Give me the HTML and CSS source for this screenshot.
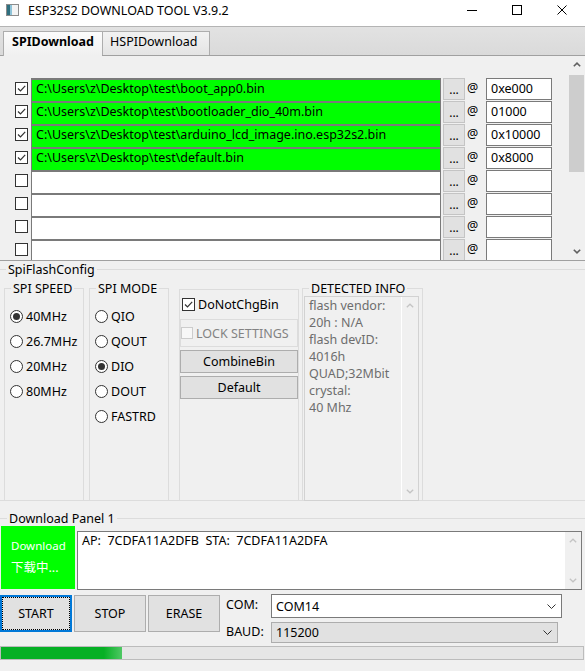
FILE: index.html
```html
<!DOCTYPE html>
<html>
<head>
<meta charset="utf-8">
<title>ESP32S2 DOWNLOAD TOOL V3.9.2</title>
<link rel="stylesheet" href="styles.css">
</head>
<body>
<div class="app">
  <header class="titlebar">
    <svg class="appicon" viewBox="0 0 13 12" width="13" height="12">
      <rect x="0.5" y="0.5" width="12" height="11" fill="#f4f4f4" stroke="#8c8c8c"/>
      <rect x="1" y="1" width="3" height="10" fill="#2f6f7f"/>
      <rect x="4" y="1" width="2" height="10" fill="#8fc3d8"/>
    </svg>
    <span class="title">ESP32S2 DOWNLOAD TOOL V3.9.2</span>
    <div class="winctl">
      <span class="winbtn"><svg viewBox="0 0 10 10"><line x1="0" y1="5.5" x2="10" y2="5.5" stroke="#000" stroke-width="1"/></svg></span>
      <span class="winbtn"><svg viewBox="0 0 10 10"><rect x="0.5" y="0.5" width="9" height="9" fill="none" stroke="#000" stroke-width="1"/></svg></span>
      <span class="winbtn close"><svg viewBox="0 0 10 10"><path d="M0.5 0.5 L9.5 9.5 M9.5 0.5 L0.5 9.5" stroke="#000" stroke-width="1"/></svg></span>
    </div>
  </header>

  <nav class="tabs">
    <div class="tab active">SPIDownload</div>
    <div class="tab">HSPIDownload</div>
  </nav>

  <section class="filelist">
    <div class="rows">
      <div class="row">
        <span class="cb"><svg viewBox="0 0 11 11"><polyline points="2,5.5 4.5,8 9.2,2.8" fill="none" stroke="#333" stroke-width="1.2"/></svg></span>
        <div class="path green">C:\Users\z\Desktop\test\boot_app0.bin</div>
        <span class="dots">...</span><span class="at">@</span>
        <div class="addr green">0xe000</div>
      </div>
      <div class="row">
        <span class="cb"><svg viewBox="0 0 11 11"><polyline points="2,5.5 4.5,8 9.2,2.8" fill="none" stroke="#333" stroke-width="1.2"/></svg></span>
        <div class="path green">C:\Users\z\Desktop\test\bootloader_dio_40m.bin</div>
        <span class="dots">...</span><span class="at">@</span>
        <div class="addr green">01000</div>
      </div>
      <div class="row">
        <span class="cb"><svg viewBox="0 0 11 11"><polyline points="2,5.5 4.5,8 9.2,2.8" fill="none" stroke="#333" stroke-width="1.2"/></svg></span>
        <div class="path green">C:\Users\z\Desktop\test\arduino_lcd_image.ino.esp32s2.bin</div>
        <span class="dots">...</span><span class="at">@</span>
        <div class="addr green">0x10000</div>
      </div>
      <div class="row">
        <span class="cb"><svg viewBox="0 0 11 11"><polyline points="2,5.5 4.5,8 9.2,2.8" fill="none" stroke="#333" stroke-width="1.2"/></svg></span>
        <div class="path green">C:\Users\z\Desktop\test\default.bin</div>
        <span class="dots">...</span><span class="at">@</span>
        <div class="addr green">0x8000</div>
      </div>
      <div class="row">
        <span class="cb"></span><div class="path"></div>
        <span class="dots">...</span><span class="at">@</span><div class="addr"></div>
      </div>
      <div class="row">
        <span class="cb"></span><div class="path"></div>
        <span class="dots">...</span><span class="at">@</span><div class="addr"></div>
      </div>
      <div class="row">
        <span class="cb"></span><div class="path"></div>
        <span class="dots">...</span><span class="at">@</span><div class="addr"></div>
      </div>
      <div class="row">
        <span class="cb"></span><div class="path"></div>
        <span class="dots">...</span><span class="at">@</span><div class="addr"></div>
      </div>
    </div>
    <div class="vscroll">
      <span class="sb-arrow"><svg viewBox="0 0 8 5" width="8" height="5"><polyline points="0.8,4.3 4,1.2 7.2,4.3" fill="none" stroke="#606060" stroke-width="1.6"/></svg></span>
      <span class="sb-thumb"></span>
      <span class="sb-track"></span>
      <span class="sb-arrow"><svg viewBox="0 0 8 5" width="8" height="5"><polyline points="0.8,0.7 4,3.8 7.2,0.7" fill="none" stroke="#606060" stroke-width="1.6"/></svg></span>
    </div>
  </section>

  <fieldset class="spiflash">
    <legend>SpiFlashConfig</legend>
    <div class="cfg">
      <fieldset class="sub speed">
        <legend>SPI SPEED</legend>
        <div class="opt"><span class="radio on"></span>40MHz</div>
        <div class="opt"><span class="radio"></span>26.7MHz</div>
        <div class="opt"><span class="radio"></span>20MHz</div>
        <div class="opt"><span class="radio"></span>80MHz</div>
      </fieldset>
      <fieldset class="sub mode">
        <legend>SPI MODE</legend>
        <div class="opt"><span class="radio"></span>QIO</div>
        <div class="opt"><span class="radio"></span>QOUT</div>
        <div class="opt"><span class="radio on"></span>DIO</div>
        <div class="opt"><span class="radio"></span>DOUT</div>
        <div class="opt"><span class="radio"></span>FASTRD</div>
      </fieldset>
      <fieldset class="sub opts">
        <div class="chk"><span class="cb small"><svg viewBox="0 0 11 11"><polyline points="2,5.5 4.5,8 9.2,2.8" fill="none" stroke="#333" stroke-width="1.2"/></svg></span>DoNotChgBin</div>
        <div class="lockbox"><span class="cb small disabled"></span>LOCK SETTINGS</div>
        <button class="btn wide">CombineBin</button>
        <button class="btn wide">Default</button>
      </fieldset>
      <fieldset class="sub info">
        <legend>DETECTED INFO</legend>
        <div class="infobox">
          <div class="infotext">flash vendor:<br>20h : N/A<br>flash devID:<br>4016h<br>QUAD;32Mbit<br>crystal:<br>40 Mhz</div>
          <div class="vscroll dis">
            <span class="sb-arrow"><svg viewBox="0 0 8 5" width="8" height="5"><polyline points="0.8,4.3 4,1.2 7.2,4.3" fill="none" stroke="#c4c4c4" stroke-width="1.3"/></svg></span>
            <span class="sb-track"></span>
            <span class="sb-arrow"><svg viewBox="0 0 8 5" width="8" height="5"><polyline points="0.8,0.7 4,3.8 7.2,0.7" fill="none" stroke="#c4c4c4" stroke-width="1.3"/></svg></span>
          </div>
        </div>
      </fieldset>
    </div>
  </fieldset>

  <fieldset class="dlpanel">
    <legend>Download Panel 1</legend>
    <div class="dlrow">
      <div class="status"><span class="st-en">Download</span><span class="st-zh">下载中...</span></div>
      <div class="log">
        <div class="logtext">AP:  7CDFA11A2DFB  STA:  7CDFA11A2DFA</div>
        <div class="vscroll dis">
          <span class="sb-arrow"><svg viewBox="0 0 8 5" width="8" height="5"><polyline points="0.8,4.3 4,1.2 7.2,4.3" fill="none" stroke="#c4c4c4" stroke-width="1.3"/></svg></span>
          <span class="sb-track"></span>
          <span class="sb-arrow"><svg viewBox="0 0 8 5" width="8" height="5"><polyline points="0.8,0.7 4,3.8 7.2,0.7" fill="none" stroke="#c4c4c4" stroke-width="1.3"/></svg></span>
        </div>
      </div>
    </div>
  </fieldset>

  <div class="actions">
    <button class="btn act focus">START</button>
    <button class="btn act">STOP</button>
    <button class="btn act">ERASE</button>
    <div class="ports">
      <span class="plabel com">COM:</span>
      <div class="combo com"><span>COM14</span><svg viewBox="0 0 9 5" width="9" height="5"><polyline points="0.5,0.5 4.5,4.5 8.5,0.5" fill="none" stroke="#333" stroke-width="1"/></svg></div>
      <span class="plabel baud">BAUD:</span>
      <div class="combo baud"><span>115200</span><svg viewBox="0 0 9 5" width="9" height="5"><polyline points="0.5,0.5 4.5,4.5 8.5,0.5" fill="none" stroke="#333" stroke-width="1"/></svg></div>
    </div>
  </div>

  <div class="progress"><div class="fill" style="width:121px"></div></div>
</div>
</body>
</html>
```

FILE: styles.css
```css
* { box-sizing: border-box; }
html, body { margin: 0; padding: 0; }
body {
  width: 585px; height: 671px; overflow: hidden;
  background: #f0f0f0;
  font-family: "Noto Sans", "Noto Sans CJK SC", sans-serif;
  font-size: 12.5px; color: #000;
}
.app { display: flex; flex-direction: column; }

/* title bar */
.titlebar {
  height: 27px; flex: none; background: #fff;
  border-bottom: 1px solid #b4b4b4;
  display: flex; align-items: flex-start;
}
.appicon { width: 13px; height: 12px; margin: 4px 9px 0 6px; flex: none; }
.title { font-size: 12.5px; line-height: 17px; margin-top: 2px; }
.winctl { margin-left: auto; display: flex; }
.winbtn { width: 45px; height: 20px; display: flex; align-items: center; justify-content: center; }
.winbtn.close { width: 46px; }
.winbtn svg { width: 10px; height: 10px; }

/* tabs */
.tabs {
  height: 29px; flex: none; display: flex; align-items: flex-end;
  padding-left: 3px;
  background: linear-gradient(#e2e2e2, #dadada);
  border-bottom: 1px solid #a0a0a0;
}
.tab {
  height: 24px; border: 1px solid #adadad; border-bottom: 0;
  padding: 1px 0 0 7px; line-height: 17px; width: 108px;
  background: linear-gradient(#f2f2f2, #e4e4e4);
}
.tab.active {
  width: 99px; height: 25px; margin-bottom: -1px; padding-left: 8px;
  font-weight: bold; border-right: 0;
  background: linear-gradient(#fcfcfc, #f0f0f0);
}

/* file list */
.filelist { height: 205px; flex: none; display: flex; border-bottom: 1px solid #a0a0a0; }
.rows { flex: 1; overflow: hidden; padding: 22px 0 0 15px; }
.row { height: 23px; display: flex; align-items: flex-start; }
.cb {
  width: 13px; height: 13px; flex: none; margin: 4px 3px 0 0;
  border: 1px solid #333; background: #fff; display: flex;
}
.cb svg { width: 11px; height: 11px; }
.path {
  width: 410px; height: 23px; flex: none; background: #fff;
  border: 1px solid #7a7a7a; border-top-width: 2px; border-bottom: 0;
  padding-left: 4px; line-height: 17px; white-space: nowrap; overflow: hidden;
}
.green { background: #00ff00; }
.dots {
  width: 22px; height: 22px; flex: none; margin-left: 2px;
  background: #e1e1e1; border: 1px solid #c4c4c4;
  text-align: center; line-height: 22px; font-size: 12px;
}
.at { width: 21px; flex: none; padding-left: 2px; line-height: 20px; }
.addr {
  width: 66px; height: 22px; flex: none; background: #fff;
  border: 1px solid #7a7a7a; padding: 1px 0 0 4px; line-height: 17px;
}

/* scrollbars */
.vscroll { width: 17px; flex: none; display: flex; flex-direction: column; background: #f0f0f0; }
.sb-arrow { height: 17px; flex: none; display: flex; align-items: center; justify-content: center; }
.sb-thumb { height: 97px; flex: none; margin: 2px 1px 0; background: #cdcdcd; }
.sb-track { flex: 1; }
.vscroll.dis { border-left: 1px solid #fff; }

/* group boxes */
fieldset { margin: 0; padding: 0; min-width: 0; border: 1px solid #dcdcdc; }
legend { padding: 0 2px; line-height: 17px; }
.spiflash { border-left: 0; border-right: 0; }
.spiflash > legend { margin-left: 6px; }
.cfg { display: flex; height: 222px; padding-top: 2px; }
.sub { border-bottom: 0; height: 220px; flex: none; }
.sub > legend { margin-left: 6px; }
.speed > legend, .mode > legend { margin-left: 1px; }
.speed { width: 80px; margin-left: 4px; padding: 7px 0 0 5px; }
.mode { width: 80px; margin-left: 5px; padding: 7px 0 0 5px; }
.opts { width: 120px; margin: 9px 0 0 10px; height: 211px; padding: 6px 0 0 0; }
.info { width: 121px; margin-left: 3px; }

.opt { height: 25px; display: flex; align-items: center; line-height: 17px; white-space: nowrap; }
.radio {
  width: 13px; height: 13px; flex: none; border-radius: 50%;
  border: 1px solid #333; background: #fff; margin-right: 3px;
  display: flex; align-items: center; justify-content: center;
}
.radio.on::after { content: ""; width: 7px; height: 7px; border-radius: 50%; background: #333; }

.chk { height: 17px; display: flex; align-items: center; padding-left: 2px; line-height: 17px; }
.cb.small { margin: 0 3px 0 0; }
.lockbox {
  height: 28px; margin-top: 6px; border: 1px solid #dcdcdc;
  display: flex; align-items: center; color: #838383; line-height: 17px;
}
.cb.disabled { border-color: #cccccc; background: #f7f7f7; width: 12px; height: 12px; }

.btn {
  font: inherit; color: #000; background: #e1e1e1;
  border: 1px solid #adadad; padding: 0; margin: 0;
}
.btn.wide { display: block; width: 118px; height: 23px; margin-top: 3px; line-height: 17px; }

.infobox {
  width: 115px; height: 205px; margin: -1px 0 0 1px;
  border: 1px solid #d2d2d2; display: flex;
}
.infotext { flex: 1; padding-left: 4px; line-height: 17px; color: #6d6d6d; white-space: nowrap; }

/* download panel */
.dlpanel { margin-top: 10px; border-left: 0; border-right: 0; border-bottom: 0; }
.dlpanel > legend { margin-left: 7px; line-height: 15px; }
.dlrow { display: flex; align-items: flex-start; }
.status {
  width: 74px; height: 63px; margin-left: 1px; flex: none;
  background: #00ff00; color: #fff;
  display: flex; flex-direction: column;
  padding: 9px 0 0 10px; white-space: nowrap;
}
.st-en { font-size: 11.5px; line-height: 22px; }
.st-zh { font-size: 12.5px; line-height: 22px; }
.log {
  width: 505px; height: 59px; margin: 5px 0 0 2px; flex: none;
  background: #fff; border: 1px solid #7a7a7a; display: flex;
}
.logtext { flex: 1; padding-left: 4px; line-height: 17px; white-space: pre; }

/* actions */
.actions { display: flex; margin-top: 4px; height: 49px; flex: none; }
.btn.act { width: 72px; height: 37px; margin-top: 1px; }
.btn.act + .btn.act { margin-left: 2px; }
.btn.focus { border: 2px solid #0078d7; outline: 1px dotted #000; outline-offset: -3px; }
.ports {
  margin-left: 6px; display: grid;
  grid-template-columns: 45px auto; grid-template-rows: 24px 21px; row-gap: 4px;
  align-items: center;
}
.plabel { line-height: 17px; margin-top: -3px; }
.combo {
  display: flex; align-items: center; justify-content: space-between;
  padding: 0 5px 0 4px; line-height: 17px;
}
.combo.com { width: 291px; height: 24px; background: #fff; border: 1px solid #7a7a7a; }
.combo.baud { width: 287px; height: 21px; background: #e1e1e1; border: 1px solid #adadad; }

/* progress */
.progress {
  width: 584px; height: 14px; margin-top: 3px; flex: none;
  background: #e6e6e6; border: 1px solid #bcbcbc;
}
.fill {
  height: 100%;
  background: linear-gradient(90deg, #06b025 0%, #06b025 85%, #4fc864 100%);
}
```
